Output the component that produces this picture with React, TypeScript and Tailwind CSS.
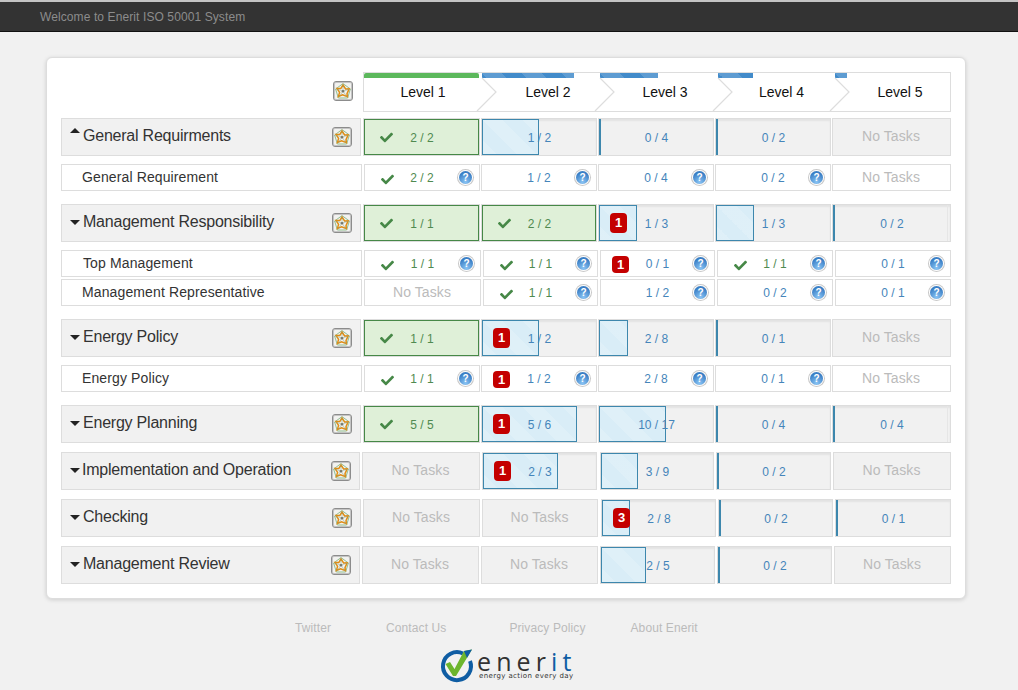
import React from "react";
import { FaCheck } from "react-icons/fa";

type Cell = null | [number, number, number?];
type Row = {
  kind: "main" | "sub";
  title: string;
  mt: number;
  labelEnd: number;
  edges: number[][];
  cells: Cell[];
  caret?: "up" | "down";
  textLeft?: number;
  edgeLine?: boolean;
};

const A = [[363, 480], [481, 597], [598, 714], [715, 831], [832, 951]];
const S = [[364, 480], [481, 597], [598, 714], [715, 831], [832, 951]];
const T = [[364, 481], [483, 598], [600, 715], [717, 833], [835, 951]];
const I = [[362, 480], [482, 597], [600, 714], [716, 831], [833, 951]];
const C = [[363, 480], [482, 598], [601, 716], [718, 833], [835, 951]];
const R = [[362, 479], [481, 598], [600, 715], [717, 832], [834, 951]];

const rows: Row[] = [
  { kind: "main", title: "General Requirments", mt: 6, labelEnd: 361, edges: A, caret: "up", cells: [[2, 2], [1, 2], [0, 4], [0, 2], null] },
  { kind: "sub", title: "General Requirement", mt: 8, labelEnd: 362, edges: S, cells: [[2, 2], [1, 2], [0, 4], [0, 2], null] },
  { kind: "main", title: "Management Responsibility", mt: 13, labelEnd: 361, edges: A, edgeLine: true, cells: [[1, 1], [2, 2], [1, 3, 1], [1, 3], [0, 2]] },
  { kind: "sub", title: "Top Management", mt: 8, labelEnd: 362, edges: T, textLeft: 21, cells: [[1, 1], [1, 1], [0, 1, 1], [1, 1], [0, 1]] },
  { kind: "sub", title: "Management Representative", mt: 2, labelEnd: 362, edges: T, cells: [null, [1, 1], [1, 2], [0, 2], [0, 1]] },
  { kind: "main", title: "Energy Policy", mt: 13, labelEnd: 361, edges: A, cells: [[1, 1], [1, 2, 1], [2, 8], [0, 1], null] },
  { kind: "sub", title: "Energy Policy", mt: 8, labelEnd: 362, edges: S, cells: [[1, 1], [1, 2, 1], [2, 8], [0, 1], null] },
  { kind: "main", title: "Energy Planning", mt: 13, labelEnd: 361, edges: A, edgeLine: true, cells: [[5, 5], [5, 6, 1], [10, 17], [0, 4], [0, 4]] },
  { kind: "main", title: "Implementation and Operation", mt: 9, labelEnd: 360, edges: I, textLeft: 20, cells: [null, [2, 3, 1], [3, 9], [0, 2], null] },
  { kind: "main", title: "Checking", mt: 9, labelEnd: 361, edges: C, cells: [null, null, [2, 8, 3], [0, 2], [0, 1]] },
  { kind: "main", title: "Management Review", mt: 9, labelEnd: 360, edges: R, cells: [null, null, [2, 5], [0, 2], null] },
];

const levels = [
  { name: "Level 1", w: 118, bar: 115, pl: 0, green: true },
  { name: "Level 2", w: 118, bar: 92, pl: 14 },
  { name: "Level 3", w: 118, bar: 58, pl: 12 },
  { name: "Level 4", w: 117, bar: 35, pl: 10 },
  { name: "Level 5", w: 115, bar: 12, pl: 15 },
];

const stripes =
  "bg-[linear-gradient(45deg,rgba(255,255,255,.15)_25%,transparent_25%,transparent_50%,rgba(255,255,255,.15)_50%,rgba(255,255,255,.15)_75%,transparent_75%,transparent)] bg-[length:40px_40px]";

function StarIcon() {
  return (
    <span className="flex h-[20px] w-[20px] shrink-0 items-center justify-center rounded-[3px] border border-[#8c8c8c] bg-[#f2f2f0] shadow-[inset_0_0_0_1px_#c4c4c4]">
      <svg width="16" height="16" viewBox="0 0 16 16" fill="none">
        <polygon points="8,0.6 15.4,6 12.6,15 3.4,15 0.6,6" stroke="#86b886" strokeWidth="0.9" />
        <polygon points="8,2 10.6,6 14.2,5.8 12,10.6 12.4,13.6 7.6,11.8 3.4,13.4 4.6,9.4 2,5.6 5.8,5.6" stroke="#e08d14" strokeWidth="1.5" />
        <path d="M8 1V8M15 6L8 8M12 14L8 8M4 14L8 8M1 6L8 8" stroke="#86a486" strokeWidth="0.5" />
        <circle cx="8" cy="8.2" r="1.3" fill="#77776a" />
      </svg>
    </span>
  );
}

function Badge({ n, big }: { n: number; big: boolean }) {
  return (
    <span
      className={`absolute left-[11px] flex w-[17px] items-center justify-center rounded-[4px] bg-[#c40000] text-[13px] font-bold text-white ${
        big ? "top-[8px] h-[20px]" : "top-[5px] h-[17px]"
      }`}
    >
      {n}
    </span>
  );
}

function Help() {
  return (
    <span className="absolute right-[7px] top-[6px] flex h-[13px] w-[13px] items-center justify-center rounded-full bg-[radial-gradient(circle_at_50%_85%,#8ac4f4,#3a7fc6_70%)] text-[10px] font-bold leading-none text-white shadow-[0_0_0_1px_#fff,0_0_0_2px_#c8c8c8]">
      ?
    </span>
  );
}

function MainCell({ cell, width, ml, line }: { cell: Cell; width: number; ml: number; line: boolean }) {
  const base = "relative shrink-0 h-full border border-[#dddddd] bg-[#f1f1f1]";
  if (!cell)
    return (
      <div
        className={`${base} flex items-center justify-center pb-[2px] pr-[1px] text-[14px] tracking-[0.1px] text-[#bbbbbb]`}
        style={{ width, marginLeft: ml }}
      >
        No Tasks
      </div>
    );
  const [d, t, badge] = cell;
  const done = d === t;
  return (
    <div
      className={`${base} flex items-center justify-center pl-[1px] pt-px text-[12px] shadow-[inset_0_2px_2px_rgba(0,0,0,0.06)] ${
        done ? "text-[#4f8a50]" : "text-[#4585ba]"
      }`}
      style={{ width, marginLeft: ml }}
    >
      {d === 0 ? (
        <span className="absolute bottom-0 left-0 top-0 w-[2px] bg-[#3d87ad]" />
      ) : done ? (
        <span className="absolute inset-0 border border-[#468847] bg-[#dff0d8]" />
      ) : (
        <span
          className={`absolute bottom-0 left-0 top-0 border border-[#3d87ad] bg-[#d9edf7] ${stripes}`}
          style={{ width: `${(d / t) * 100}%` }}
        />
      )}
      {line && d === 0 && <span className="absolute bottom-0 right-[2px] top-0 w-px bg-[#e6e6e6]" />}
      {done && <FaCheck className="absolute left-[16px] top-[12px] text-[#468847]" size={13} />}
      {badge ? <Badge n={badge} big /> : null}
      <span className="relative">{`${d} / ${t}`}</span>
    </div>
  );
}

function SubCell({ cell, width, ml }: { cell: Cell; width: number; ml: number }) {
  const base = "relative shrink-0 h-full border border-[#dddddd] bg-white";
  if (!cell)
    return (
      <div
        className={`${base} flex items-center justify-center pr-[1px] text-[14px] tracking-[0.1px] text-[#bbbbbb]`}
        style={{ width, marginLeft: ml }}
      >
        No Tasks
      </div>
    );
  const [d, t, badge] = cell;
  const done = d === t;
  return (
    <div
      className={`${base} flex items-center justify-center pt-px text-[12px] ${done ? "text-[#4f8a50]" : "text-[#4585ba]"}`}
      style={{ width, marginLeft: ml }}
    >
      {done && <FaCheck className="absolute left-[16px] top-[8px] text-[#468847]" size={13} />}
      {badge ? <Badge n={badge} big={false} /> : null}
      <span>{`${d} / ${t}`}</span>
      <Help />
    </div>
  );
}

function Caret({ up }: { up: boolean }) {
  return (
    <span
      className={`absolute left-[8px] h-0 w-0 border-x-[5px] border-x-transparent ${
        up ? "top-[9px] border-b-[5px] border-b-[#222222]" : "top-[15px] border-t-[5px] border-t-[#222222]"
      }`}
    />
  );
}

function TableRow({ row }: { row: Row }) {
  const main = row.kind === "main";
  return (
    <div className={`flex ${main ? "h-[38px]" : "h-[27px]"}`} style={{ marginTop: row.mt }}>
      <div
        className={`relative flex shrink-0 items-center border border-[#dddddd] text-[#333333] ${
          main ? "bg-[#f1f1f1] pb-[3px] text-[16px] tracking-[-0.22px]" : "bg-white pb-px text-[14px] tracking-[0.12px]"
        }`}
        style={{ width: row.labelEnd - 61, paddingLeft: row.textLeft ?? (main ? 21 : 20) }}
      >
        {main && <Caret up={row.caret === "up"} />}
        {row.title}
        {main && (
          <span className="absolute right-[8px] top-[8px]">
            <StarIcon />
          </span>
        )}
      </div>
      {row.cells.map((cell, i) => {
        const [l, r] = row.edges[i];
        const prev = i === 0 ? row.labelEnd : row.edges[i - 1][1];
        return main ? (
          <MainCell key={i} cell={cell} width={r - l} ml={l - prev} line={!!row.edgeLine && i === 4} />
        ) : (
          <SubCell key={i} cell={cell} width={r - l} ml={l - prev} />
        );
      })}
    </div>
  );
}

function HeaderRow() {
  return (
    <div className="flex h-[40px]">
      <div className="flex w-[302px] shrink-0 items-center justify-end pb-[3px] pr-[10px]">
        <StarIcon />
      </div>
      <div className="flex h-full w-[588px] border border-[#dddddd] bg-white">
        {levels.map((lv, i) => (
          <div
            key={lv.name}
            className="relative flex h-full shrink-0 items-center justify-center text-[14px] text-[#111111]"
            style={{ width: lv.w, paddingLeft: lv.pl }}
          >
            <span
              className={`absolute left-0 top-0 h-[5px] ${
                lv.green ? "rounded-t-[2px] bg-[#5cb85c]" : `bg-[#428bca] ${stripes}`
              }`}
              style={{ width: lv.bar }}
            />
            {i > 0 && (
              <svg className="absolute left-0 top-0 overflow-visible" width="15" height="38" viewBox="0 0 15 38" fill="none">
                <path d="M0 5L14 19L-5 38" stroke="#dddddd" strokeWidth="1.2" />
              </svg>
            )}
            {lv.name}
          </div>
        ))}
      </div>
    </div>
  );
}

function Logo() {
  return (
    <div className="mt-[13px] flex h-[36px] items-start justify-center">
      <svg width="36" height="36" viewBox="0 0 36 36" fill="none" className="ml-[-2px]">
        <path d="M24 5.5A14 14 0 1 0 31 13" stroke="#0f5da3" strokeWidth="4" />
        <path d="M6.5 16L11 14L15.5 21L25 3L33 1.5L17 28H14Z" fill="#6cb52c" />
        <path d="M25 3L33 1.5L28 10Z" fill="#0f5da3" />
      </svg>
      <div className="ml-[2px] flex w-[100px] flex-col">
        <div className="mt-[3px] h-[20px] font-['Open_Sans',sans-serif] text-[25px] leading-[20px] tracking-[5.1px] text-[#333333]">
          ener<span className="text-[#0f5da3]">it</span>
        </div>
        <div className="mt-[1px] whitespace-nowrap pl-[2px] font-['DejaVu_Sans',sans-serif] text-[7px] leading-[9px] tracking-[0.4px] text-[#333333]">
          energy action every day
        </div>
      </div>
    </div>
  );
}

export default function App() {
  return (
    <div className="h-[690px] w-[1018px] overflow-hidden bg-[#f1f1f1] font-['Liberation_Sans',Arial,sans-serif]">
      <div className="flex h-[32px] items-center border-b border-t-2 border-b-[#111111] border-t-[#c4c4c4] bg-[#333333] pl-[40px] text-[12px] tracking-[0.1px] text-[#8c8c8c]">
        Welcome to Enerit ISO 50001 System
      </div>
      <div className="ml-[46px] mt-[25px] h-[542px] w-[920px] rounded-[6px] border border-[#dddddd] bg-white pl-[14px] pt-[14px] shadow-[0_1px_4px_rgba(0,0,0,0.15)]">
        <HeaderRow />
        {rows.map((r) => (
          <TableRow key={r.kind + r.title} row={r} />
        ))}
      </div>
      <div className="mt-[22px] flex pl-[295px] text-[12px] leading-[14px] tracking-[0.1px] text-[#bbbbbb]">
        <span>Twitter</span>
        <span className="ml-[55px]">Contact Us</span>
        <span className="ml-[63px]">Privacy Policy</span>
        <span className="ml-[45px]">About Enerit</span>
      </div>
      <Logo />
    </div>
  );
}
